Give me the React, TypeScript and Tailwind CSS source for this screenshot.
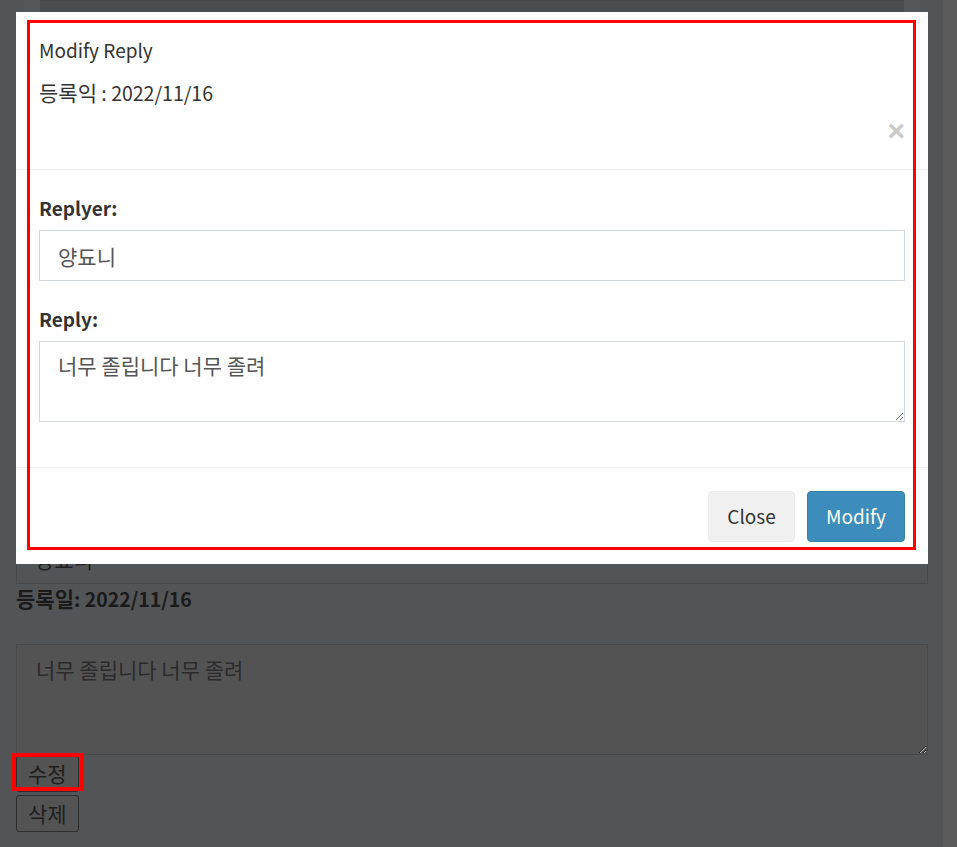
import React from "react";

const font = "font-['Noto_Sans_CJK_KR','Noto_Sans',sans-serif]";

function ReplyModal() {
  return (
    <div className="absolute left-[16px] top-[12px] w-[912px] bg-white text-[19px] text-[#333]">
      <div className="px-[23px] pt-[23px] pb-[23px] border-b border-[#efefef]">
        <div className="h-[30px] leading-[30px]">Modify Reply</div>
        <div className="mt-[13px] h-[30px] leading-[30px] text-[19.5px]">
          <span className="text-[21px] leading-none">등록익</span> : 2022/11/16
        </div>
        <div className="mt-[8px] h-[30px] flex justify-end">
          <button className="font-['Liberation_Sans',sans-serif] text-[30px] font-bold leading-[30px] text-[#c9c9c9]">
            ×
          </button>
        </div>
      </div>

      <div className="px-[23px] pt-[23px] pb-[23px]">
        <div className="mb-[23px]">
          <label className="block h-[30px] font-bold leading-[30px] mb-[7px]">Replyer:</label>
          <input
            readOnly
            value="양됴니"
            className="block w-full h-[51px] border border-[#d2d6de] px-[18px] text-[21px] text-[#555] outline-none"
          />
        </div>
        <div className="mb-[22px]">
          <label className="block h-[30px] font-bold leading-[30px] mb-[7px]">Reply:</label>
          <textarea
            readOnly
            value="너무 졸립니다 너무 졸려"
            className="block w-full h-[81px] border border-[#d2d6de] px-[18px] pt-[8px] pb-[9px] text-[21px] leading-[30px] text-[#555] outline-none"
          />
        </div>
      </div>

      <div className="flex justify-end gap-[12px] border-t border-[#efefef] px-[23px] pt-[23px] pb-[22px]">
        <button className="w-[87px] h-[51px] rounded-[4px] bg-[#f0f0f0] border border-[#ececec] text-[#333]">
          Close
        </button>
        <button className="w-[98px] h-[51px] rounded-[4px] bg-[#3c8dbc] border border-[#367fa9] text-white">
          Modify
        </button>
      </div>
    </div>
  );
}

export default function App() {
  return (
    <div className={`relative h-[847px] overflow-hidden flex bg-[#535456] ${font}`}>
      <main className="flex-1 pl-[16px] pr-[15px] text-[21px]">
        <div className="h-[533px]">
          <div className="mx-[8px] h-[140px] bg-[#565759] px-[16px]">
            <div className="h-full bg-[#4b4c4e] border-t border-[#464749]" />
          </div>
        </div>
        <input
          readOnly
          value="양됴니"
          className="block w-full h-[51px] border border-[#48494b] bg-[#535456] px-[18px] text-[21px] text-[#1e1e1e] outline-none"
        />
        <div className="h-[30px] font-bold leading-[30px] text-[19.5px] text-[#1a1a1a]">
          <span className="text-[21px] leading-none">등록일</span>: 2022/11/16
        </div>
        <textarea
          readOnly
          value="너무 졸립니다 너무 졸려"
          className="block w-full h-[111px] mt-[30px] border border-[#48494b] bg-[#535353] px-[19px] py-[9px] text-[21px] leading-[30px] text-[#2b2a2c] outline-none"
        />
        <div className="flex flex-col items-start gap-[3px] mt-[1px]">
          <button className="relative h-[36px] px-[11px] border border-[#2e2e2e] rounded-[3px] bg-[#535353] text-[21px] text-[#1e1e1e]">
            수정
            <span className="absolute -left-[5px] -top-[4px] w-[72px] h-[38px] border-[4px] border-[#ff0000]" />
          </button>
          <button className="h-[37px] px-[11px] border border-[#2e2e2e] rounded-[3px] bg-[#535353] text-[21px] text-[#1e1e1e]">
            삭제
          </button>
        </div>
      </main>
      <div className="w-[14px] bg-[#5a5a5a]" />

      <ReplyModal />
      <div className="absolute left-[27px] top-[20px] w-[889px] h-[530px] border-[3px] border-[#ff0000] pointer-events-none" />
    </div>
  );
}
